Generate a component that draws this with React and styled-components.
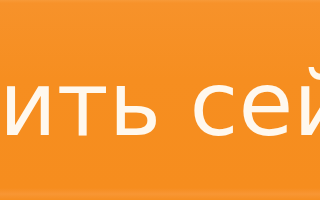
import React from "react";
import styled, { createGlobalStyle } from "styled-components";

const Global = createGlobalStyle`
  html, body { margin: 0; padding: 0; background: #f68e1f; overflow: hidden; }
  #root { width: 320px; height: 200px; }
`;

const Button = styled.button`
  width: 320px;
  height: 200px;
  margin: 0;
  padding: 0 0 0 12px;
  border: none;
  display: flex;
  align-items: center;
  justify-content: center;
  overflow: hidden;
  background: linear-gradient(#f89a38 0px, #f7922a 3px, #f68e20 40%, #f68d1e 94%, #f89634 97%, #f68e20 100%);
  cursor: pointer;
`;

const Label = styled.span`
  font-family: "DejaVu Sans", "Open Sans", sans-serif;
  font-size: 89px;
  font-weight: 400;
  color: #fff8ee;
  white-space: nowrap;
  line-height: 1;
  transform: translateY(4px);
`;

export default function App() {
  return (
    <>
      <Global />
      <Button>
        <Label>Купить сейчас</Label>
      </Button>
    </>
  );
}
